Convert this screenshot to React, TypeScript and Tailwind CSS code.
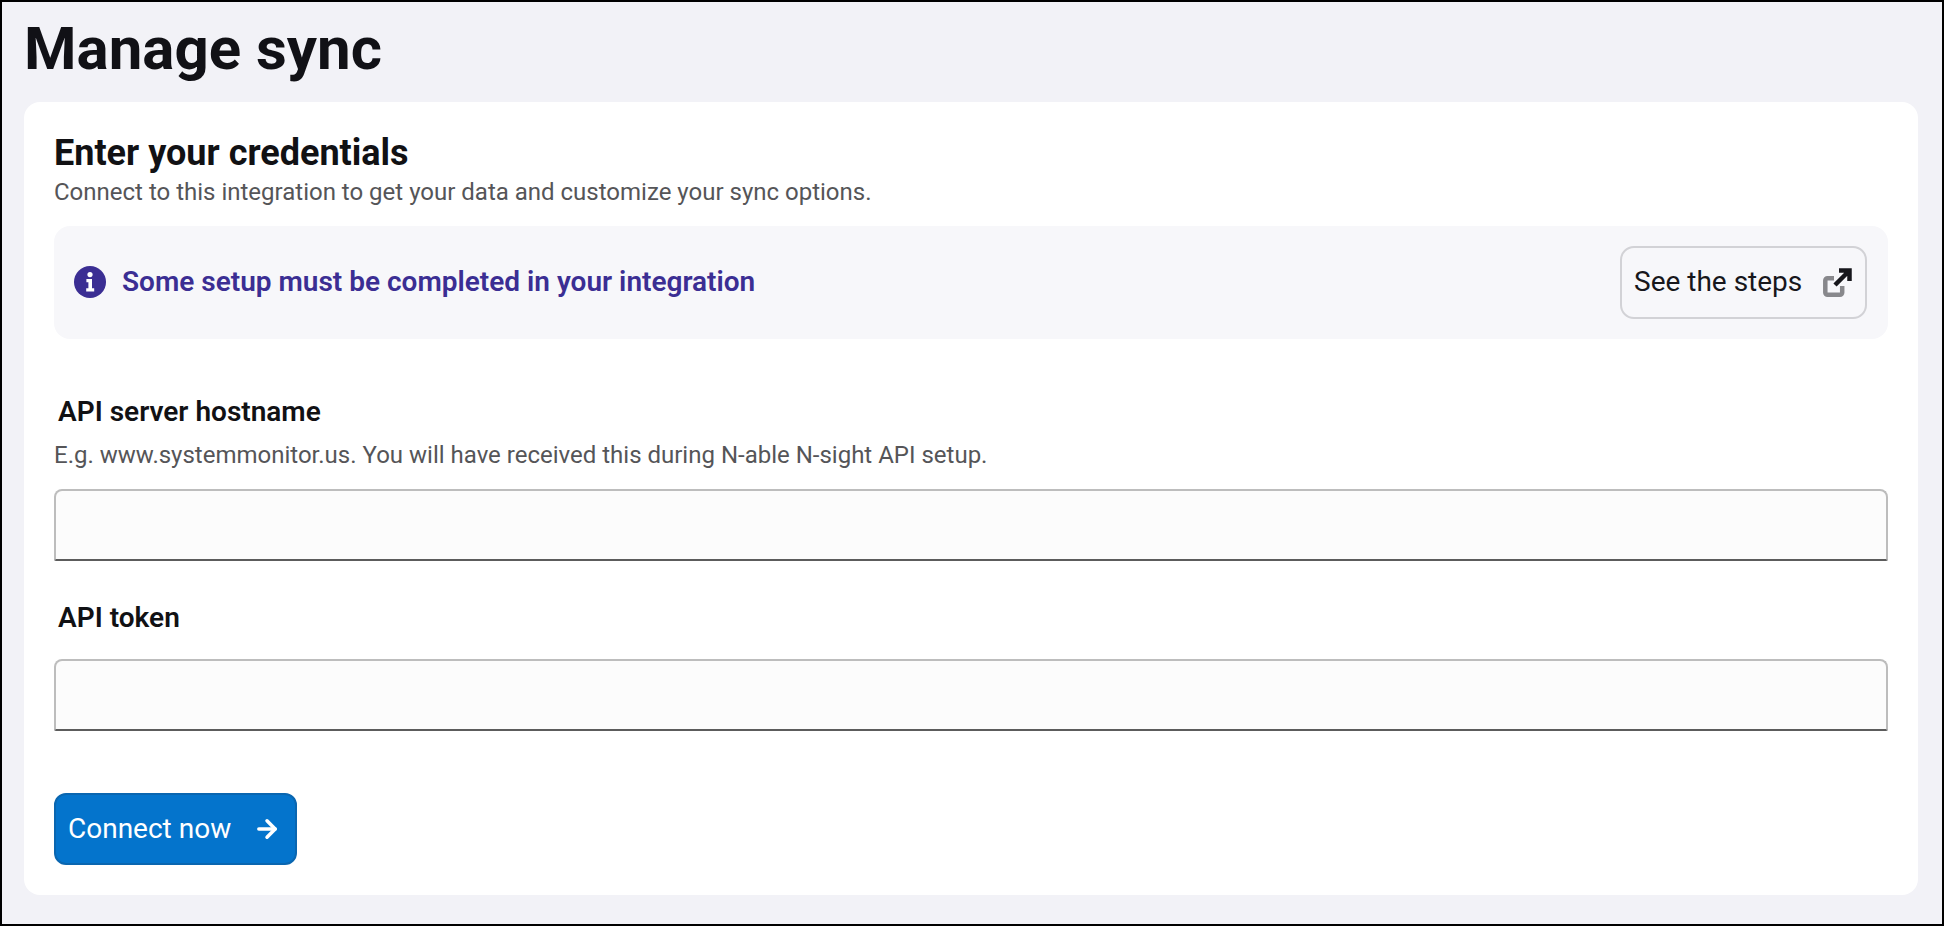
import { ArrowRight } from "lucide-react";

function Field({ label, hint }: { label: string; hint?: string }) {
  return (
    <div className="flex flex-col">
      <label className="pl-1 text-[28px] leading-[32px] font-semibold text-[#111114]">{label}</label>
      {hint && <p className="mt-[11px] text-[24px] leading-[32px] text-[#555558]">{hint}</p>}
      <input
        type="text"
        className={`${hint ? "mt-[18px]" : "mt-[25px]"} h-[72px] w-full rounded-t-[8px] rounded-b-[2px] border-2 border-[#bdbdbd] border-b-[#5c5c5c] bg-[#fcfcfc]`}
      />
    </div>
  );
}

export default function App() {
  return (
    <div className="flex h-[926px] flex-col border-2 border-black bg-[#f2f2f7] pr-[24px] pb-[29px] pl-[22px] font-['Roboto',sans-serif]">
      <h1 className="pt-[12px] text-[60px] leading-[70px] font-bold text-[#111116]">Manage sync</h1>
      <main className="mt-[18px] flex flex-1 flex-col rounded-[16px] bg-white px-[30px] pt-[31px]">
        <h2 className="text-[36px] leading-[40px] font-bold text-[#111114]">Enter your credentials</h2>
        <p className="mt-[3px] text-[24px] leading-[32px] text-[#555558]">
          Connect to this integration to get your data and customize your sync options.
        </p>

        <div className="mt-[18px] flex h-[113px] items-center rounded-[16px] bg-[#f7f7fa] pr-[21px] pb-[1px] pl-[20px]">
          <svg viewBox="0 0 32 32" className="h-[32px] w-[32px] shrink-0">
            <circle cx="16" cy="16" r="16" fill="#3b2e93" />
            <circle cx="16" cy="8.6" r="2.6" fill="#fff" />
            <path d="M12.4 13h5.6v9.2h2.2v3.2h-8v-3.2h2.2v-6h-2z" fill="#fff" />
          </svg>
          <span className="ml-[16px] flex-1 text-[28px] font-semibold text-[#3b2e93]">
            Some setup must be completed in your integration
          </span>
          <button className="flex h-[73px] w-[247px] items-center justify-between rounded-[14px] border-2 border-[#d2d2d6] pr-[13px] pl-[12px] text-[28px] text-[#17171c]">
            See the steps
            <svg viewBox="0 0 29 29" className="h-[29px] w-[29px]" fill="none">
              <path d="M11 10.200H4.500a2.200 2.200 0 0 0-2.200 2.200V24.500a2.200 2.200 0 0 0 2.200 2.200H17a2.200 2.200 0 0 0 2.200-2.200V18" stroke="#88888c" strokeWidth="4.500" />
              <path d="M12 17 25 4M16 2.500H26.500V13" stroke="#17171c" strokeWidth="4.500" />
            </svg>
          </button>
        </div>

        <div className="mt-[57px] flex flex-col gap-[41px]">
          <Field label="API server hostname" hint="E.g. www.systemmonitor.us. You will have received this during N-able N-sight API setup." />
          <Field label="API token" />
        </div>

        <button className="mt-[62px] flex h-[72px] w-[243px] items-center justify-between rounded-[12px] border-2 border-[#0a66b0] bg-[#0474cc] pr-[14px] pl-[12px] text-[28px] text-white">
          Connect now
          <ArrowRight className="h-[28px] w-[28px]" strokeWidth={3} />
        </button>
      </main>
    </div>
  );
}
